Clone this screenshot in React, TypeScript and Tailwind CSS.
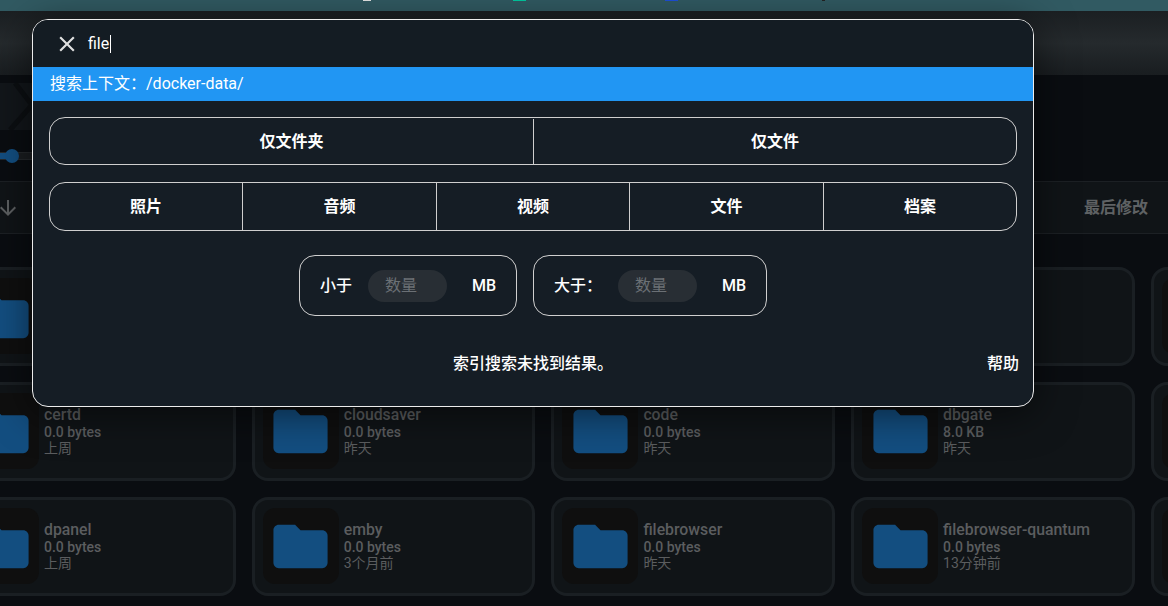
import { useState } from "react"

const folderPath = "M10 4H4c-1.1 0-1.99.9-1.99 2L2 18c0 1.1.9 2 2 2h16c1.1 0 2-.9 2-2V8c0-1.1-.9-2-2-2h-8l-2-2z"

const cards = [
  { name: "", size: "", date: "" },
  { name: "", size: "", date: "" },
  { name: "", size: "", date: "" },
  { name: "", size: "", date: "" },
  { name: "", size: "", date: "" },
  { name: "certd", size: "0.0 bytes", date: "上周" },
  { name: "cloudsaver", size: "0.0 bytes", date: "昨天" },
  { name: "code", size: "0.0 bytes", date: "昨天" },
  { name: "dbgate", size: "8.0 KB", date: "昨天" },
  { name: "", size: "", date: "" },
  { name: "dpanel", size: "0.0 bytes", date: "上周" },
  { name: "emby", size: "0.0 bytes", date: "3个月前" },
  { name: "filebrowser", size: "0.0 bytes", date: "昨天" },
  { name: "filebrowser-quantum", size: "0.0 bytes", date: "13分钟前" },
  { name: "", size: "", date: "" },
]

function FolderCard({ name, size, date }: { name: string; size: string; date: string }) {
  return (
    <div className="flex h-[99px] items-start gap-[5px] rounded-2xl border-[3px] border-[#1a1f23] bg-[#101417] pt-[8px] pl-[8px]">
      <div className="flex h-[76px] w-[76px] shrink-0 items-center justify-center rounded-xl bg-[#0f0f0f]">
        <svg viewBox="0 0 24 24" className="h-[65px] w-[65px] fill-[#134e80]">
          <path d={folderPath} />
        </svg>
      </div>
      <div className="flex flex-col pt-[13px] text-[14px] font-medium text-[#5b5d5f]">
        <span className="text-[15.8px] leading-[18px]">{name}</span>
        <span className="leading-[17px]">{size}</span>
        <span className="leading-[15px] font-normal">{date}</span>
      </div>
    </div>
  )
}

export default function App() {
  const [less, setLess] = useState("")
  const [more, setMore] = useState("")

  return (
    <div className="relative h-[606px] w-[1168px] overflow-hidden bg-[#0a0d11] font-['Roboto','Noto_Sans_CJK_SC',sans-serif]">
      {/* strip of the page behind */}
      <div className="flex h-[11px] items-start bg-[#315a62] pl-[363px]">
        <div className="h-px w-[8px] bg-[#e5e5e5]" />
        <div className="ml-[142px] h-px w-[13px] bg-[#00c9a0]" />
        <div className="ml-[139px] h-px w-[13px] bg-[#1d4fd8]" />
        <div className="ml-[144px] h-px w-[3px] bg-[#222222]" />
      </div>
      <div className="h-[64px] bg-gradient-to-b from-[#1b1f22] via-[#252a2d] to-[#191d20]" />

      {/* view controls */}
      <div className="flex h-[106px] flex-col pt-[8px]">
        <div className="h-[47px] w-[32px] bg-[#12161a]">
          <svg viewBox="0 0 32 47" className="h-[47px] w-[32px] stroke-[#0c0f12]" strokeWidth="5" fill="none">
            <path d="M15 0 L32 22 L10 47" />
          </svg>
        </div>
        <div className="relative mt-[22px] h-[8px] w-[32px] border-y border-[#25292c] bg-[#1a1d20]">
          <div className="h-full w-[12px] bg-[#134e80]" />
          <div className="absolute top-[-4px] left-[5px] h-[14px] w-[14px] rounded-full bg-[#134e80]" />
        </div>
      </div>

      {/* sort bar */}
      <div className="flex h-[53px] items-center justify-between border-y border-[#1c2024] bg-[#101417] pr-[20px] text-[#5f6264]">
        <svg viewBox="0 0 24 24" className="ml-[-4px] h-[24px] w-[24px] fill-[#5c5f61]">
          <path d="m20 12-1.41-1.41L13 16.17V4h-2v12.17l-5.58-5.59L4 12l8 8 8-8z" />
        </svg>
        <span className="text-[16px] font-bold">最后修改</span>
      </div>

      {/* folder grid */}
      <div className="mt-[33px] ml-[-48px] grid grid-cols-[repeat(5,283.7px)] gap-x-[16px] gap-y-[16px]">
        {cards.map((c, i) => (
          <FolderCard key={i} name={c.name} size={c.size} date={c.date} />
        ))}
      </div>

      {/* search dialog */}
      <div className="absolute top-[19px] left-[32px] w-[1002px] overflow-hidden rounded-[16px] border border-[#ececec] bg-[#151d25] text-white shadow-[0_6px_40px_rgba(0,0,0,0.55)]">
        <div className="flex h-[47px] items-center bg-[#141c23] pl-[21px]">
          <svg viewBox="0 0 24 24" className="h-[26px] w-[26px] fill-[#e0e0e0]">
            <path d="M19 6.41 17.59 5 12 10.59 6.41 5 5 6.41 10.59 12 5 17.59 6.41 19 12 13.41 17.59 19 19 17.59 13.41 12z" />
          </svg>
          <span className="ml-[8px] border-r border-white pr-px text-[16px] leading-[18px]">file</span>
        </div>
        <div className="flex h-[34px] items-center bg-[#2196f3] pl-[17px] text-[16px]">搜索上下文：/docker-data/</div>

        <div className="flex flex-col px-[16px] pt-[16px]">
          <div className="grid h-[48px] grid-cols-[484px_1fr] rounded-2xl border border-[#cfcfcf] pt-px text-[16px] font-semibold">
            <div className="flex items-center justify-center border-r border-[#cfcfcf]">仅文件夹</div>
            <div className="flex items-center justify-center">仅文件</div>
          </div>
          <div className="mt-[17px] grid h-[49px] grid-cols-[193px_194px_193px_194px_1fr] rounded-2xl border border-[#cfcfcf] text-[16px] font-semibold">
            <div className="flex items-center justify-center border-r border-[#cfcfcf]">照片</div>
            <div className="flex items-center justify-center border-r border-[#cfcfcf]">音频</div>
            <div className="flex items-center justify-center border-r border-[#cfcfcf]">视频</div>
            <div className="flex items-center justify-center border-r border-[#cfcfcf]">文件</div>
            <div className="flex items-center justify-center">档案</div>
          </div>

          <div className="mt-[24px] flex justify-center gap-[16px] text-[16px] font-medium">
            <div className="flex h-[61px] items-center rounded-2xl border border-[#cfcfcf] px-[20px]">
              <span className="w-[32px]">小于</span>
              <input
                value={less}
                onChange={(e) => setLess(e.target.value)}
                placeholder="数量"
                className="mr-[25px] ml-[16px] h-[32px] w-[79px] rounded-2xl bg-[#282e34] px-[17px] text-[16px] font-normal outline-none placeholder:text-[#6b7075]"
              />
              <span className="w-[24px]">MB</span>
            </div>
            <div className="flex h-[61px] items-center rounded-2xl border border-[#cfcfcf] px-[20px]">
              <span className="w-[48px]">大于：</span>
              <input
                value={more}
                onChange={(e) => setMore(e.target.value)}
                placeholder="数量"
                className="mr-[25px] ml-[16px] h-[32px] w-[79px] rounded-2xl bg-[#282e34] px-[17px] text-[16px] font-normal outline-none placeholder:text-[#6b7075]"
              />
              <span className="w-[24px]">MB</span>
            </div>
          </div>
        </div>

        <div className="mt-[36px] mb-[30px] grid h-[24px] grid-cols-[1fr_auto_1fr] items-center px-[14px] text-[16px] font-medium">
          <span />
          <span>索引搜索未找到结果。</span>
          <span className="justify-self-end">帮助</span>
        </div>
      </div>
    </div>
  )
}
